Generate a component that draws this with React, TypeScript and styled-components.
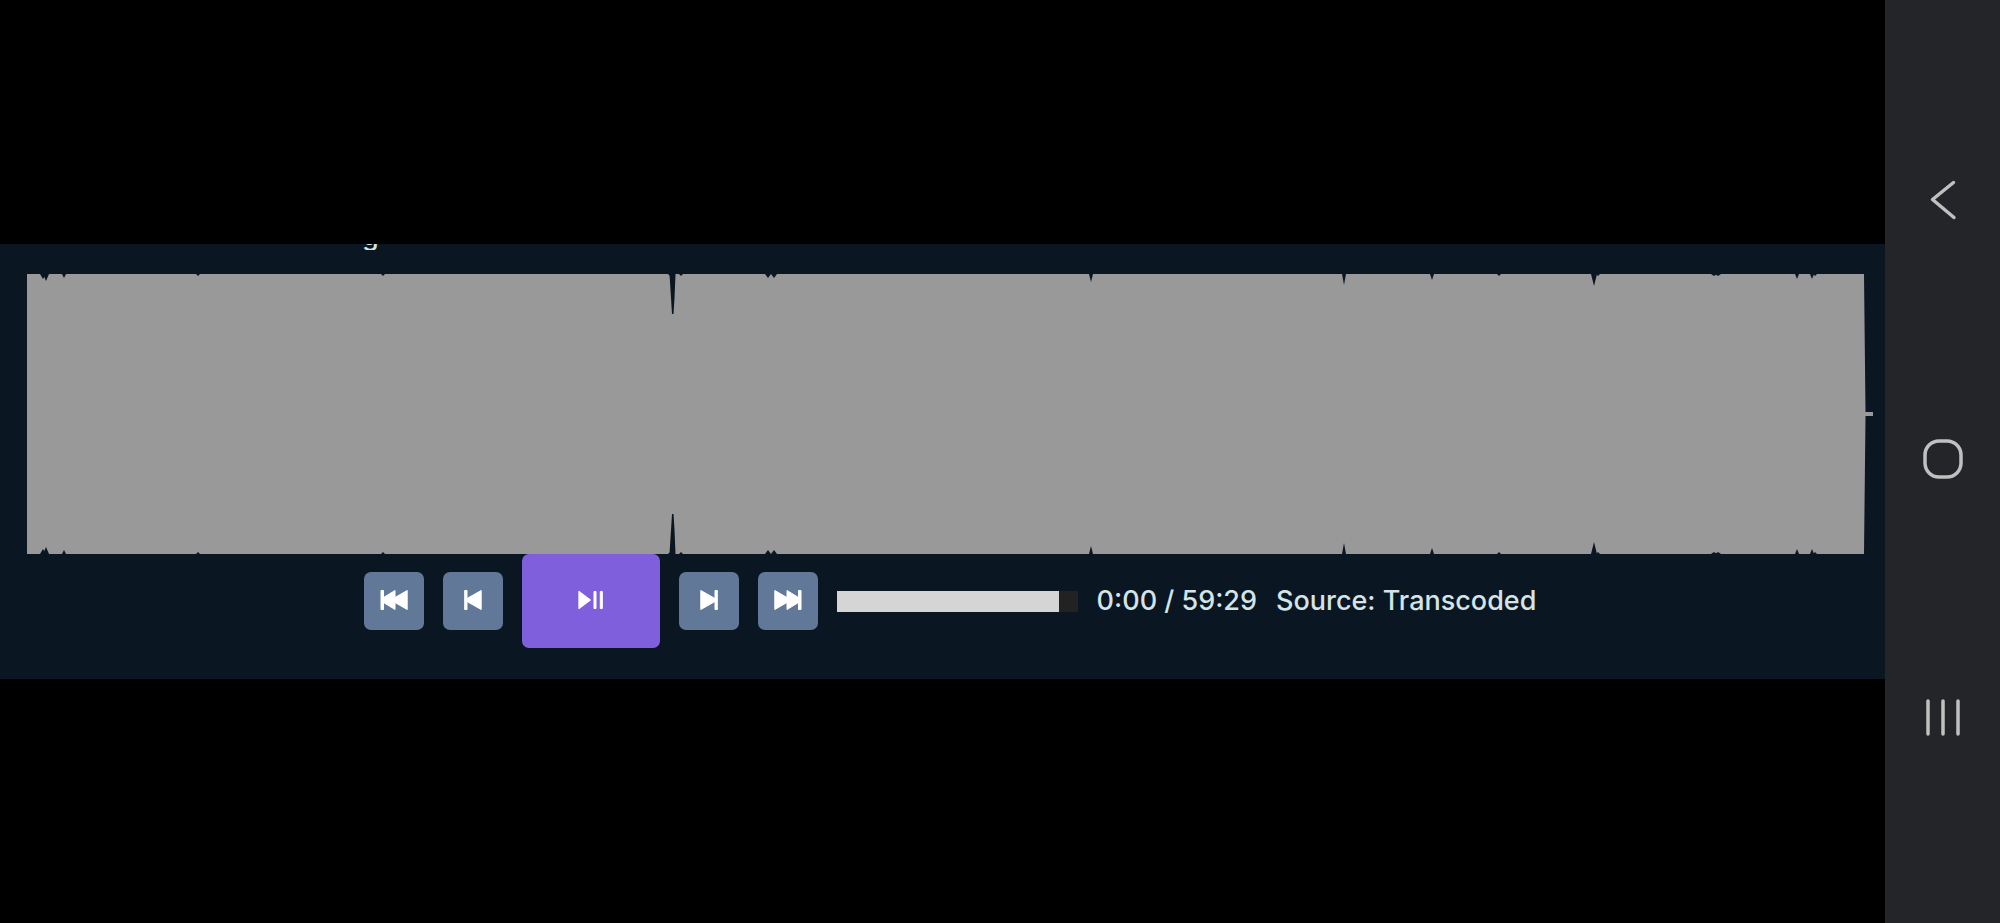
import React, { useState } from "react";
import styled, { createGlobalStyle } from "styled-components";

const GlobalStyle = createGlobalStyle`
  *, *::before, *::after { box-sizing: border-box; }
  body { margin: 0; background: #000; }
`;

const Screen = styled.div`
  display: flex;
  min-height: 100vh;
  background: #000;
  color: #d5e4e6;
  font-family: Inter, "Open Sans", sans-serif;
`;

const Stage = styled.main`
  flex: 1;
  min-width: 0;
  display: flex;
  flex-direction: column;
  justify-content: center;
`;

const Player = styled.section`
  padding: 0 12px 31px 27px;
  background: #0a1622;
`;

const TitleStrip = styled.div`
  display: flex;
  align-items: flex-end;
  height: 6px;
  margin-bottom: 24px;
  padding-left: 335px;
  overflow: hidden;
`;

const Title = styled.h1`
  margin: 0;
  font-size: 27px;
  font-weight: 500;
  line-height: 28px;
`;

const WaveSvg = styled.svg`
  display: block;
  width: 100%;
  height: 280px;
`;

const Controls = styled.div`
  display: flex;
  align-items: center;
  justify-content: center;
  gap: 19px;
`;

const ControlButton = styled.button<{ $primary?: boolean }>`
  display: flex;
  align-items: center;
  justify-content: center;
  flex: none;
  width: ${(p) => (p.$primary ? 138 : 60)}px;
  height: ${(p) => (p.$primary ? 94 : 58)}px;
  padding: 0 0 2px;
  border: 0;
  border-radius: 7px;
  background: ${(p) => (p.$primary ? "#805fdd" : "#627898")};
  color: #fff;
  cursor: pointer;
`;

const Glyph = styled.svg`
  display: block;
  fill: currentColor;
  stroke: currentColor;
  stroke-width: 1;
  stroke-linejoin: round;
`;

const Slider = styled.input<{ $value: number }>`
  appearance: none;
  flex: none;
  width: 241px;
  height: 21px;
  margin: 0;
  background: linear-gradient(
    to right,
    #d5d5d5 ${(p) => p.$value}%,
    #222 ${(p) => p.$value}%
  );

  &::-webkit-slider-thumb {
    appearance: none;
    width: 1px;
    height: 21px;
    background: transparent;
  }
`;

const Readout = styled.span`
  font-size: 27px;
  font-weight: 500;
  line-height: 34px;
  white-space: nowrap;
`;

const SystemBar = styled.nav`
  display: flex;
  flex-direction: column;
  align-items: center;
  justify-content: space-between;
  flex: none;
  width: 115px;
  padding: 176px 0 182px;
  background: #242528;
`;

const SystemButton = styled.button`
  display: block;
  padding: 0;
  border: 0;
  background: none;
  color: #c0c0c0;
  cursor: pointer;
`;

const Outline = styled.svg`
  display: block;
  fill: none;
  stroke: currentColor;
  stroke-linecap: round;
  stroke-linejoin: round;
`;

/* Quiet moments in the recording: [position, half width, depth] */
const DIPS: [number, number, number][] = [
  [16, 3, 5],
  [19, 3, 7],
  [37, 2, 4],
  [171, 2, 2],
  [356, 2, 2],
  [644, 3, 3],
  [654, 2, 2],
  [741, 3, 4],
  [747, 3, 4],
  [1064, 2, 8],
  [1317, 2, 11],
  [1405, 2, 6],
  [1472, 2, 2],
  [1567, 3, 12],
  [1571, 2, 2],
  [1687, 3, 2],
  [1691, 3, 2],
  [1770, 2, 5],
  [1785, 2, 5],
  [1788, 2, 2],
];

function Waveform() {
  return (
    <WaveSvg
      viewBox="0 0 1846 280"
      preserveAspectRatio="none"
      role="img"
      aria-label="Waveform"
    >
      <path d="M0 0H1837L1838.5 138H1846V142H1838.5L1837 280H0Z" fill="#999" />
      <g fill="#0a1622">
        {DIPS.map(([x, w, d]) => (
          <path
            key={x}
            d={`M${x - w} 0L${x - w / 2} ${d / 2}L${x} ${d}L${x + w / 2} ${d / 2}L${x + w} 0Z M${x - w} 280L${x - w / 2} ${280 - d / 2}L${x} ${280 - d}L${x + w / 2} ${280 - d / 2}L${x + w} 280Z`}
          />
        ))}
        <path d="M642.500 0L644 24L645 40H646.500L647.500 24L648.500 0Z" />
        <path d="M642.500 280L644 256L645 240H646.500L647.500 256L648.500 280Z" />
      </g>
    </WaveSvg>
  );
}

const SkipStart = () => (
  <Glyph width="28" height="20" viewBox="0 0 28 20">
    <path d="M1 .5H3.500V7.500L15 .5V7.500L27.200 .5V19.500L15 12.500V19.500L3.500 12.500V19.500H1Z" />
  </Glyph>
);

const StepBack = () => (
  <Glyph width="18" height="20" viewBox="0 0 18 20">
    <path d="M.7 .5H3V8.500L17.200 .5V19.500L3 11.500V19.500H.7Z" />
  </Glyph>
);

const PlayPause = () => (
  <Glyph width="26" height="20" viewBox="0 0 26 20">
    <path d="M.9 1.200V18.800L12.600 10Z" />
    <path d="M16 1.500H18V18.500H16ZM22.300 1.500H24.300V18.500H22.300Z" />
  </Glyph>
);

const StepForward = () => (
  <Glyph width="18" height="20" viewBox="0 0 18 20">
    <path d="M17.300 .5H15V8.500L.8 .5V19.500L15 11.500V19.500H17.300Z" />
  </Glyph>
);

const SkipEnd = () => (
  <Glyph width="28" height="20" viewBox="0 0 28 20">
    <path d="M27 .5H24.500V7.500L13 .5V7.500L.8 .5V19.500L13 12.500V19.500L24.500 12.500V19.500H27Z" />
  </Glyph>
);

export default function App() {
  const [level, setLevel] = useState(92);

  return (
    <Screen>
      <GlobalStyle />
      <Stage>
        <Player>
          <TitleStrip>
            <Title>g</Title>
          </TitleStrip>
          <Waveform />
          <Controls>
            <ControlButton type="button" aria-label="Skip to start">
              <SkipStart />
            </ControlButton>
            <ControlButton type="button" aria-label="Step back">
              <StepBack />
            </ControlButton>
            <ControlButton type="button" $primary aria-label="Play or pause">
              <PlayPause />
            </ControlButton>
            <ControlButton type="button" aria-label="Step forward">
              <StepForward />
            </ControlButton>
            <ControlButton type="button" aria-label="Skip to end">
              <SkipEnd />
            </ControlButton>
            <Slider
              type="range"
              min={0}
              max={100}
              value={level}
              $value={level}
              aria-label="Volume"
              onChange={(e) => setLevel(Number(e.target.value))}
            />
            <Readout>0:00 / 59:29</Readout>
            <Readout>Source: Transcoded</Readout>
          </Controls>
        </Player>
      </Stage>
      <SystemBar aria-label="System navigation">
        <SystemButton type="button" aria-label="Back">
          <Outline width="48" height="48" viewBox="0 0 48 48" strokeWidth="3.500">
            <path d="M34.500 6.500L13.500 23.500L35 41.500" />
          </Outline>
        </SystemButton>
        <SystemButton type="button" aria-label="Home">
          <Outline width="48" height="48" viewBox="0 0 48 48" strokeWidth="3.500">
            <rect x="6" y="6" width="36" height="36" rx="14" />
          </Outline>
        </SystemButton>
        <SystemButton type="button" aria-label="Recent apps">
          <Outline width="48" height="48" viewBox="0 0 48 48" strokeWidth="3.500">
            <path d="M9 8V41M24 8V41M39 8V41" />
          </Outline>
        </SystemButton>
      </SystemBar>
    </Screen>
  );
}
